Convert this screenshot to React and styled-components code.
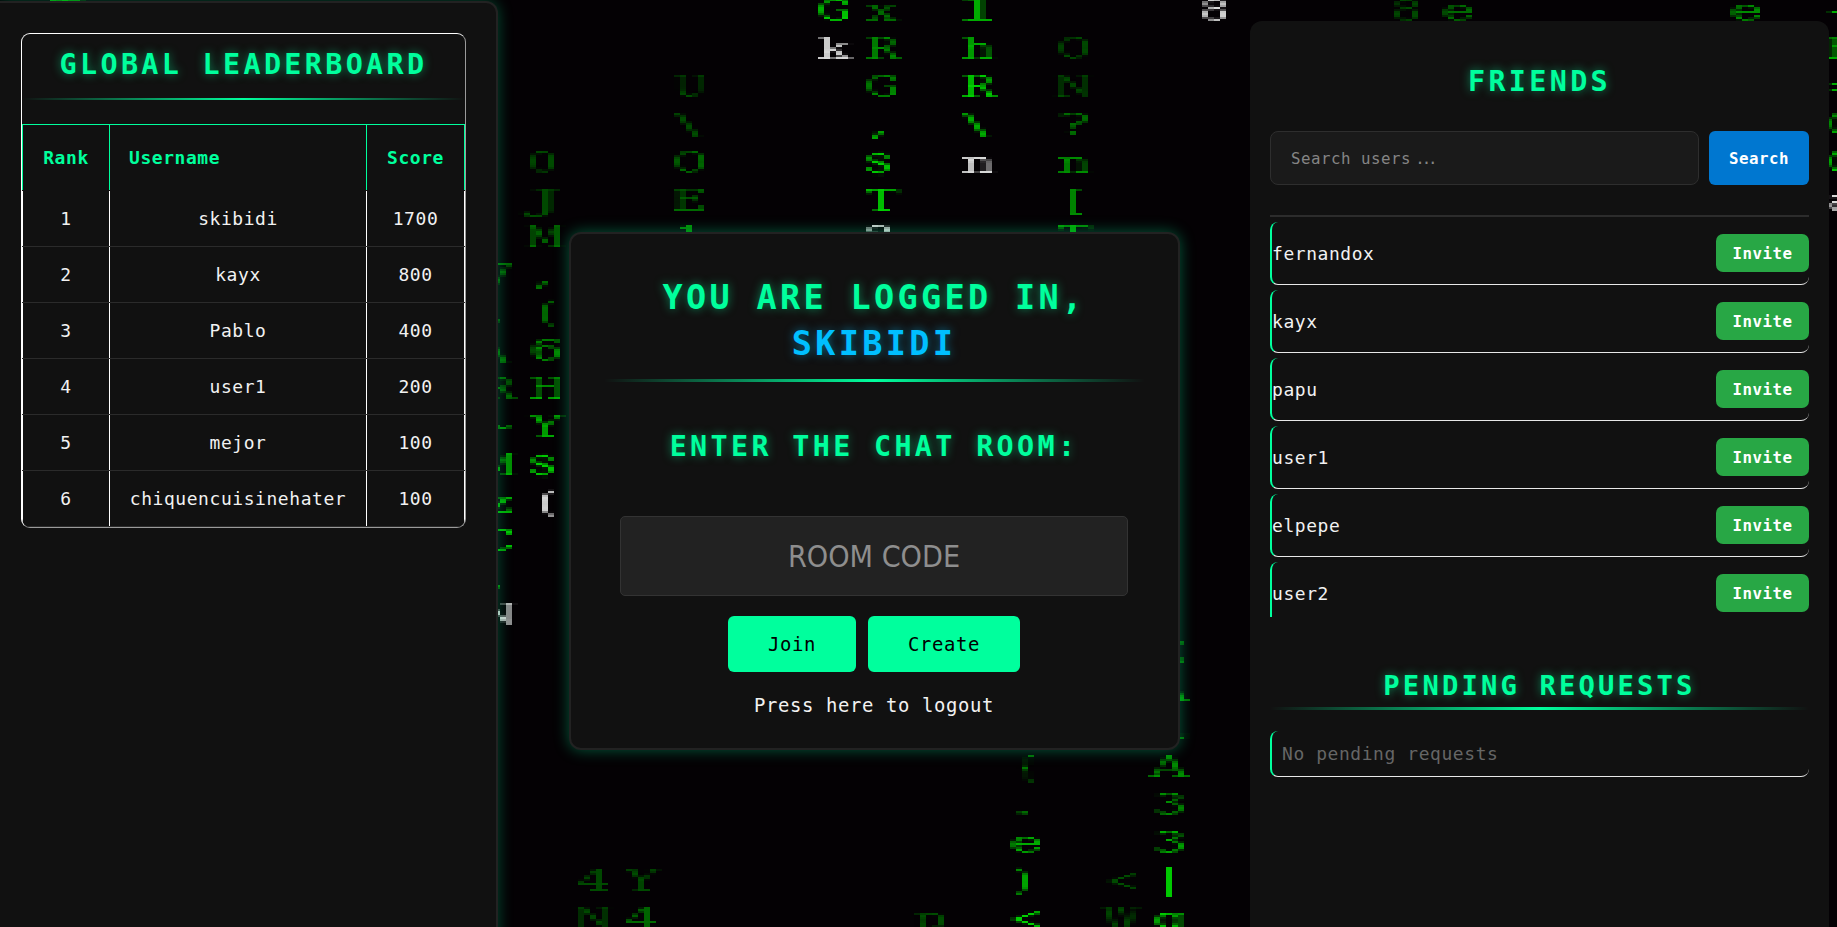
import React from "react";
import styled, { createGlobalStyle, css } from "styled-components";

const GREEN = "#00ff9d";

const GlobalStyle = createGlobalStyle`
  *, *::before, *::after { box-sizing: border-box; }
  html, body { margin: 0; padding: 0; background: #040104; overflow: hidden; }
  body { font-family: "DejaVu Sans Mono", monospace; color: #f2f2f2; }
`;

/* Monospace text whose advance is 0.6 of the nominal size. */
const mono = (size) => css`
  font-family: "DejaVu Sans Mono", monospace;
  font-size: ${size * 0.945}px;
  letter-spacing: ${size * 0.0311}px;
`;

const Page = styled.div`
  position: relative;
  display: flex;
  align-items: flex-start;
  width: 1837px;
  height: 927px;
  overflow: hidden;
  background: #040104;
`;

const RainLayer = styled.svg`
  position: absolute;
  inset: 0;
  width: 1837px;
  height: 927px;
`;

const Glyph = styled.text`
  font-family: "DejaVu Serif", serif;
  font-size: 30px;
`;

const Leaderboard = styled.aside`
  position: relative;
  flex: none;
  width: 498px;
  height: 940px;
  margin-top: 1px;
  padding: 30px 30px 0 21px;
  background: #111;
  border: 2px solid #222;
  border-left: none;
  border-radius: 0 12px 0 0;
  box-shadow: 0 0 15px rgba(0, 255, 157, 0.3);
`;

const Heading = styled.h2`
  margin: 0;
  font-size: ${(p) => (p.$small ? 27.2 : 28.4)}px;
  font-weight: bold;
  letter-spacing: ${(p) => (p.$small ? 3.15 : 3.34)}px;
  line-height: ${(p) => p.$line}px;
  text-align: center;
  text-transform: uppercase;
  white-space: nowrap;
  color: ${GREEN};
  text-shadow: 0 0 10px rgba(0, 255, 157, 0.5);
`;

const Glow = styled.div`
  height: ${(p) => p.$h}px;
  background: linear-gradient(to right, transparent, ${GREEN}, transparent);
`;

const Board = styled.section`
  width: 445px;
  border: 1px solid;
  border-color: #fff #9a9a9a #9a9a9a #fff;
  border-radius: 9px;
  overflow: hidden;
`;

const BoardTop = styled.div`
  display: flex;
  flex-direction: column;
  gap: 2px;
  height: 90px;
`;

const BoardRow = styled.div`
  display: grid;
  grid-template-columns: 87px 257px 99px;
  height: ${(p) => (p.$head ? 67 : 56)}px;
  border-top: ${(p) => (p.$head ? `1px solid ${GREEN}` : "none")};
  border-bottom: 1px solid ${(p) => (p.$head ? "#111" : "#2b2b2b")};
`;

const Cell = styled.div`
  ${mono(19)}
  display: flex;
  align-items: center;
  justify-content: ${(p) => (p.$left ? "flex-start" : "center")};
  padding-left: ${(p) => (p.$left ? 19 : 0)}px;
  font-weight: ${(p) => (p.$head ? "bold" : "normal")};
  color: ${(p) => (p.$head ? GREEN : "#f2f2f2")};
  border-left: 1px solid ${(p) => (p.$head ? GREEN : "#fff")};
  &:last-child { border-right: 1px solid ${(p) => (p.$head ? GREEN : "#fff")}; }
`;

const Lobby = styled.main`
  position: relative;
  flex: none;
  width: 611px;
  height: 518px;
  margin: 232px 0 0 70.5px;
  padding: 41px 33px 0;
  background: #111;
  border: 2px solid #222;
  border-radius: 12px;
  box-shadow: 0 0 15px rgba(0, 255, 157, 0.35);
`;

const Title = styled.h1`
  margin: 0 0 12px;
  font-size: 33.5px;
  letter-spacing: 3.32px;
  line-height: 46px;
  text-align: center;
  text-transform: uppercase;
  color: ${GREEN};
  text-shadow: 0 0 10px rgba(0, 255, 157, 0.5);
  span {
    display: block;
    color: #00bfff;
    text-shadow: 0 0 10px rgba(0, 191, 255, 0.5);
  }
`;

const RoomPrompt = styled.div`
  padding: 35px 0 39px;
`;

const RoomInput = styled.input`
  display: block;
  width: 508px;
  height: 80px;
  margin: 0 auto 20px;
  padding: 0;
  background: #222;
  border: 1px solid #333;
  border-radius: 5px;
  outline: none;
  font-family: "DejaVu Sans Condensed", "DejaVu Sans", sans-serif;
  font-stretch: condensed;
  font-size: 30.2px;
  text-align: center;
  color: #fff;
  &::placeholder { color: #8e8e8e; opacity: 1; }
`;

const Actions = styled.div`
  display: flex;
  justify-content: center;
  gap: 12px;
  margin-bottom: 19px;
`;

const ActionButton = styled.button`
  ${mono(20)}
  height: 56px;
  padding: 0 40px;
  border: none;
  border-radius: 6px;
  background: ${GREEN};
  color: #000;
`;

const Logout = styled.p`
  ${mono(20)}
  margin: 0;
  line-height: 28px;
  text-align: center;
`;

const Friends = styled.aside`
  position: relative;
  flex: none;
  width: 579px;
  height: 920px;
  margin: 21px 8px 0 auto;
  padding: 12px 20px 0;
  background: #111;
  border-radius: 12px;
`;

const SearchRow = styled.div`
  display: flex;
  gap: 10px;
  height: 54px;
  margin-bottom: 30px;
`;

const SearchField = styled.div`
  ${mono(16.7)}
  display: flex;
  align-items: center;
  flex: 1;
  padding-left: 20px;
  background: #1a1a1a;
  border: 1px solid #2e2e2e;
  border-radius: 8px;
  color: #858585;
  span { margin-left: 4px; letter-spacing: -3px; }
`;

const SearchButton = styled.button`
  ${mono(16.7)}
  width: 100px;
  padding: 0;
  border: none;
  border-radius: 6px;
  background: #0077d0;
  color: #fff;
  font-weight: bold;
`;

const FriendList = styled.ul`
  display: flex;
  flex-direction: column;
  gap: 5px;
  height: 402px;
  margin: 0;
  padding: 5px 0 0;
  overflow: hidden;
  list-style: none;
  border-top: 2px solid #2c2c2c;
`;

const FriendRow = styled.li`
  ${mono(19)}
  display: flex;
  flex: none;
  align-items: center;
  justify-content: space-between;
  height: ${(p) => (p.$empty ? 46 : 63)}px;
  padding-left: ${(p) => (p.$empty ? 10 : 0)}px;
  list-style: none;
  border-left: 2px solid ${GREEN};
  border-bottom: 1px solid #e8e8e8;
  border-radius: 8px;
  color: ${(p) => (p.$empty ? "#666" : "#f2f2f2")};
`;

const InviteButton = styled.button`
  ${mono(16.7)}
  width: 93px;
  height: 38px;
  padding: 0;
  border: none;
  border-radius: 7px;
  background: #28a745;
  color: #fff;
  font-weight: bold;
`;

const Pending = styled.section`
  display: flex;
  flex-direction: column;
  padding-top: 47px;
`;

const PendingList = styled.ul`
  margin: 21px 0 0;
  padding: 0;
`;

const W = "#d8d8d8";
const D1 = "#004c00";
const D2 = "#006a00";
const D3 = "#008c00";
const D4 = "#00ac00";
const D5 = "#00d000";

/* Falling columns: left edge, first row, then [glyph, colour] downwards. */
const COLUMNS = [
  [50, 0, [["T", D4]]],
  [482, 7, [["7", D2], [".", D2], ["\\", D2], ["R", D2], ["~", D3], ["M", D4], ["z", D4], ["C", D5], [".", D4], ["N", W]]],
  [530, 4, [["0", D1], ["J", D1], ["M", D2], [",", D3], ["(", D2], ["6", D3], ["H", D4], ["Y", D4], ["$", D5], ["(", W]]],
  [578, 23, [["4", D1], ["N", D1]]],
  [626, 23, [["Y", D1], ["4", D2]]],
  [674, 2, [["U", D1], ["\\", D1], ["O", D2], ["E", D2], ["1", D3]]],
  [818, 0, [["G", D5], ["k", W]]],
  [866, 0, [["x", D2], ["R", D3], ["G", D3], [",", D5], ["$", D5], ["T", D5], ["8", W]]],
  [914, 24, [["p", D1]]],
  [962, 0, [["l", D4], ["h", D4], ["R", D5], ["\\", D4], ["n", W]]],
  [1010, 20, [["{", D3], [".", D3], ["e", D4], [")", D4], ["<", D5]]],
  [1058, 1, [["O", D1], ["N", D1], ["?", D2], ["n", D3], ["[", D3], ["T", D4]]],
  [1106, 23, [["<", D1], ["W", D1]]],
  [1154, 17, [["E", D2], ["A", D3], ["L", D2], ["A", D3], ["3", D3], ["3", D4], ["|", D5], ["q", D5]]],
  [1202, 0, [["8", W]]],
  [1394, 0, [["8", D1]]],
  [1442, 0, [["e", D2]]],
  [1730, 0, [["e", D3]]],
  [1826, 0, [["-", D4], ["E", D4], ["=", D4], ["C", D4], ["C", D5], ["a", W]]],
];

/* Width and shift of a glyph inside its 48px column. */
function glyphBox(ch) {
  if (/[\\]/.test(ch)) return { w: 26, dx: 0 };
  if (/[,.]/.test(ch)) return { w: 18, dx: 3 };
  if (/[({[]/.test(ch)) return { w: 20, dx: 7 };
  if (/[)]/.test(ch)) return { w: 18, dx: 3 };
  if (/[|]/.test(ch)) return { w: 22, dx: 4 };
  if (/[08$]/.test(ch)) return { w: 28, dx: -2 };
  if (/[MNWAE]/.test(ch)) return { w: 37, dx: -4 };
  return { w: 33, dx: -1 };
}

function Rain() {
  return (
    <RainLayer viewBox="0 0 1837 927" aria-hidden="true">
      <defs>
        <filter id="blocks" filterUnits="userSpaceOnUse" x="-4" y="-7" width="1848" height="942" colorInterpolationFilters="sRGB">
          <feGaussianBlur in="SourceGraphic" stdDeviation="0.9 0.3" result="soft" />
          <feFlood floodColor="#fff" x="4" y="1" width="1" height="1" />
          <feComposite x="2" y="1" width="6" height="2" />
          <feTile result="grid" />
          <feComposite in="soft" in2="grid" operator="in" result="s1" />
          <feOffset in="s1" dx="1" dy="0" result="o1" />
          <feMerge result="s2"><feMergeNode in="s1" /><feMergeNode in="o1" /></feMerge>
          <feOffset in="s2" dx="2" dy="0" result="o2" />
          <feOffset in="s2" dx="4" dy="0" result="o4" />
          <feMerge result="s6"><feMergeNode in="s2" /><feMergeNode in="o2" /><feMergeNode in="o4" /></feMerge>
          <feOffset in="s6" dx="0" dy="1" result="v1" />
          <feMerge result="full"><feMergeNode in="s6" /><feMergeNode in="v1" /></feMerge>
          <feOffset in="full" dx="-2" dy="0" />
        </filter>
      </defs>
      <g filter="url(#blocks)">
        {COLUMNS.map(([x, first, cells]) =>
          cells.map(([ch, color], i) => {
            const { w, dx } = glyphBox(ch);
            return (
              <Glyph
                key={`${x}-${i}`}
                x={x + dx}
                y={20 + Math.round((first + i) * 18.9) * 2}
                fill={color}
                textLength={w}
                lengthAdjust="spacingAndGlyphs"
              >
                {ch}
              </Glyph>
            );
          })
        )}
      </g>
    </RainLayer>
  );
}

const SCORES = [
  ["skibidi", 1700],
  ["kayx", 800],
  ["Pablo", 400],
  ["user1", 200],
  ["mejor", 100],
  ["chiquencuisinehater", 100],
];

const FRIENDS = ["fernandox", "kayx", "papu", "user1", "elpepe", "user2"];

export default function App() {
  return (
    <Page>
      <GlobalStyle />
      <Rain />
      <Leaderboard>
        <Board>
          <BoardTop>
            <Heading $line={62}>Global Leaderboard</Heading>
            <Glow $h={2} />
          </BoardTop>
          <BoardRow $head>
            <Cell $head>Rank</Cell>
            <Cell $head $left>Username</Cell>
            <Cell $head>Score</Cell>
          </BoardRow>
          {SCORES.map(([name, score], i) => (
            <BoardRow key={name}>
              <Cell>{i + 1}</Cell>
              <Cell>{name}</Cell>
              <Cell>{score}</Cell>
            </BoardRow>
          ))}
        </Board>
      </Leaderboard>
      <Lobby>
        <Title>
          You are logged in, <span>skibidi</span>
        </Title>
        <Glow $h={3} />
        <RoomPrompt>
          <Heading $line={60}>Enter the chat room:</Heading>
        </RoomPrompt>
        <RoomInput placeholder="ROOM CODE" />
        <Actions>
          <ActionButton>Join</ActionButton>
          <ActionButton>Create</ActionButton>
        </Actions>
        <Logout>Press here to logout</Logout>
      </Lobby>
      <Friends>
        <Heading $line={98}>Friends</Heading>
        <SearchRow>
          <SearchField>Search users<span>...</span></SearchField>
          <SearchButton>Search</SearchButton>
        </SearchRow>
        <FriendList>
          {FRIENDS.map((name) => (
            <FriendRow key={name}>
              {name}
              <InviteButton>Invite</InviteButton>
            </FriendRow>
          ))}
        </FriendList>
        <Pending>
          <Heading $small $line={43}>Pending Requests</Heading>
          <Glow $h={3} />
          <PendingList>
            <FriendRow $empty>No pending requests</FriendRow>
          </PendingList>
        </Pending>
      </Friends>
    </Page>
  );
}
